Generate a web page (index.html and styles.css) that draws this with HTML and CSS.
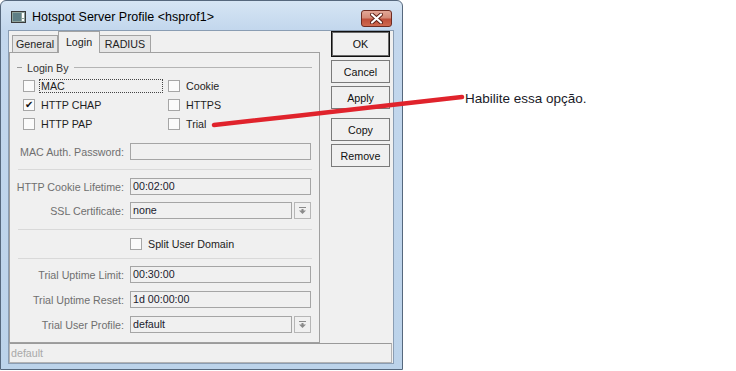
FILE: index.html
```html
<!DOCTYPE html>
<html lang="pt">
<head>
  <meta charset="UTF-8" />
  <title>Hotspot Server Profile</title>
  <link rel="stylesheet" href="styles.css">
</head>
<body>
<div class="page">
  <div class="window">
    <div class="titlebar">
      <svg class="app-icon" width="15" height="12" viewBox="0 0 15 12">
        <rect x="0.5" y="0.5" width="14" height="11" fill="#8fa39c" stroke="#3a3a3a"/>
        <rect x="2" y="2" width="8" height="8" fill="#5f7f86"/>
        <rect x="11" y="2" width="2" height="5" fill="#ffffff"/>
        <rect x="11" y="8" width="2" height="2" fill="#ffffff"/>
      </svg>
      <span class="title">Hotspot Server Profile &lt;hsprof1&gt;</span>
      <div class="close">
        <svg width="13" height="11" viewBox="0 0 13 11">
          <path d="M2 1.5 L11 9.5 M11 1.5 L2 9.5" stroke="#5a1d14" stroke-width="4" stroke-linecap="round"/>
          <path d="M2 1.5 L11 9.5 M11 1.5 L2 9.5" stroke="#ffffff" stroke-width="2.2" stroke-linecap="round"/>
        </svg>
      </div>
    </div>

    <div class="client">
      <div class="main">
        <div class="left">
          <div class="tabs">
            <div class="tab tab-general">General</div>
            <div class="tab tab-login active">Login</div>
            <div class="tab tab-radius">RADIUS</div>
          </div>

          <div class="panel">
            <div class="group-head">
              <span class="dash"></span>
              <span class="group-title">Login By</span>
              <span class="group-line"></span>
            </div>

            <div class="checks">
              <div class="check"><span class="box"></span><span class="cb-label focus">MAC</span></div>
              <div class="check"><span class="box"></span><span class="cb-label">Cookie</span></div>
              <div class="check"><span class="box checked">&#10004;</span><span class="cb-label">HTTP CHAP</span></div>
              <div class="check"><span class="box"></span><span class="cb-label">HTTPS</span></div>
              <div class="check"><span class="box"></span><span class="cb-label">HTTP PAP</span></div>
              <div class="check"><span class="box"></span><span class="cb-label">Trial</span></div>
            </div>

            <div class="row row-mac">
              <span class="label">MAC Auth. Password:</span>
              <span class="input"></span>
            </div>

            <div class="sep sep-1"></div>

            <div class="row row-cookie">
              <span class="label">HTTP Cookie Lifetime:</span>
              <span class="input">00:02:00</span>
            </div>
            <div class="row row-ssl">
              <span class="label">SSL Certificate:</span>
              <span class="combo">
                <span class="input">none</span>
                <span class="drop">
                  <svg width="7" height="7" viewBox="0 0 7 7"><rect x="0" y="0" width="7" height="1" fill="#8a8a8a"/><rect x="2.5" y="2" width="2" height="2" fill="#8a8a8a"/><path d="M0 3.5 L7 3.5 L3.5 7 Z" fill="#8a8a8a"/></svg>
                </span>
              </span>
            </div>

            <div class="sep sep-2"></div>

            <div class="row row-split">
              <span class="label"></span>
              <div class="check"><span class="box"></span><span class="cb-label">Split User Domain</span></div>
            </div>

            <div class="sep sep-3"></div>

            <div class="row row-limit">
              <span class="label">Trial Uptime Limit:</span>
              <span class="input">00:30:00</span>
            </div>
            <div class="row row-reset">
              <span class="label">Trial Uptime Reset:</span>
              <span class="input">1d 00:00:00</span>
            </div>
            <div class="row row-profile">
              <span class="label">Trial User Profile:</span>
              <span class="combo">
                <span class="input">default</span>
                <span class="drop">
                  <svg width="7" height="7" viewBox="0 0 7 7"><rect x="0" y="0" width="7" height="1" fill="#8a8a8a"/><rect x="2.5" y="2" width="2" height="2" fill="#8a8a8a"/><path d="M0 3.5 L7 3.5 L3.5 7 Z" fill="#8a8a8a"/></svg>
                </span>
              </span>
            </div>
          </div>
        </div>

        <div class="buttons">
          <button class="btn btn-default">OK</button>
          <button class="btn">Cancel</button>
          <button class="btn">Apply</button>
          <button class="btn btn-gap">Copy</button>
          <button class="btn">Remove</button>
        </div>
      </div>

      <div class="status">default</div>
    </div>
  </div>

  <div class="note">Habilite essa opção.</div>

  <!-- red annotation stroke drawn over the dialog -->
  <svg class="marker" width="736" height="371" viewBox="0 0 736 371">
    <path d="M214 125 L300 115.5 L400 104 L462 97" fill="none" stroke="#e0232c" stroke-width="4.5" stroke-linecap="round" stroke-linejoin="round"/>
  </svg>
</div>
</body>
</html>
```

FILE: styles.css
```css
body {
  margin: 0;
  background: #ffffff;
  font-family: "Liberation Sans", Arial, sans-serif;
}

.page {
  position: relative;
  width: 736px;
  height: 371px;
  display: flex;
  align-items: flex-start;
  overflow: hidden;
}

/* Window frame */
.window {
  box-sizing: border-box;
  width: 403px;
  height: 370px;
  border: 1px solid #56687d;
  border-radius: 6px 6px 0 0;
  background: linear-gradient(to bottom, #d6e5f4 0px, #c3d7ed 28px, #bcd3ea 100%);
  padding: 0 8px 5px 7px;
  display: flex;
  flex-direction: column;
}

.titlebar {
  height: 29px;
  display: flex;
  align-items: center;
}

.app-icon {
  margin-left: 3px;
  margin-top: 2px;
  flex: none;
}

.title {
  margin-left: 6px;
  margin-top: 3px;
  font-size: 12.5px;
  color: #000000;
  flex: 1;
}

.close {
  width: 29px;
  height: 15px;
  margin-right: 2px;
  margin-top: 5px;
  border: 1px solid #6e2c22;
  border-radius: 3px;
  background: linear-gradient(to bottom, #e3a797 0%, #d48b78 45%, #bf4f3a 55%, #cf6a50 100%);
  display: flex;
  align-items: center;
  justify-content: center;
}

/* Client area */
.client {
  box-sizing: border-box;
  height: 334px;
  border: 1px solid #8a9db3;
  background: #f0f0f0;
  display: flex;
  flex-direction: column;
}

.main {
  display: flex;
  height: 312px;
}

.left {
  width: 311px;
  display: flex;
  flex-direction: column;
}

.tabs {
  display: flex;
  align-items: flex-end;
  height: 21px;
  padding-left: 3px;
}

.tab {
  box-sizing: border-box;
  height: 17px;
  border: 1px solid #a3a3a3;
  border-bottom: none;
  background: #e6e6e6;
  font-size: 10.7px;
  color: #222222;
  display: flex;
  align-items: center;
  justify-content: center;
}

.tab-general {
  width: 46px;
}

.tab-login {
  width: 42px;
  height: 22px;
  margin-bottom: -1px;
  background: #f0f0f0;
  position: relative;
  z-index: 1;
  padding-bottom: 2px;
}

.tab-radius {
  width: 51px;
  border-left: none;
}

.panel {
  box-sizing: border-box;
  height: 291px;
  border: 1px solid #a0a0a0;
  padding-top: 8px;
  font-size: 10.7px;
}

.group-head {
  display: flex;
  align-items: center;
  height: 13px;
  padding: 0 7px;
}

.dash {
  width: 5px;
  height: 1px;
  background: #9a9a9a;
}

.group-title {
  margin: 0 5px;
  color: #333333;
}

.group-line {
  flex: 1;
  height: 1px;
  background: #b4b4b4;
}

.checks {
  display: grid;
  grid-template-columns: 145px 140px;
  grid-auto-rows: 19px;
  margin-top: 2px;
  padding-left: 13px;
}

.check {
  display: flex;
  align-items: center;
}

.box {
  box-sizing: border-box;
  width: 12px;
  height: 12px;
  border: 1px solid #a6a6a6;
  background: #fbfbfb;
  font-size: 10px;
  line-height: 10px;
  text-align: center;
  color: #111111;
  flex: none;
}

.cb-label {
  box-sizing: border-box;
  margin-left: 4px;
  padding: 0 2px 0 1px;
  border: 1px solid transparent;
  line-height: 12px;
  color: #1e1e1e;
}

.cb-label.focus {
  width: 124px;
  border: 1px dotted #444444;
}

.row {
  display: grid;
  grid-template-columns: 114px 181px;
  column-gap: 6px;
  align-items: center;
  height: 17px;
}

.label {
  text-align: right;
  color: #6f6f6f;
}

.input {
  box-sizing: border-box;
  height: 17px;
  border: 1px solid #a5a5a5;
  background: #f0f0f0;
  padding-left: 2px;
  line-height: 15px;
  color: #1b1b2e;
  overflow: hidden;
}

.combo {
  display: flex;
  gap: 2px;
}

.combo .input {
  width: 162px;
}

.drop {
  box-sizing: border-box;
  width: 17px;
  height: 17px;
  border: 1px solid #b6b6b6;
  display: flex;
  align-items: center;
  justify-content: center;
}

.sep {
  height: 1px;
  background: #d9d9d9;
  margin: 0 7px 0 8px;
}

.row-mac { margin-top: 10px; }
.sep-1 { margin-top: 9px; }
.row-cookie { margin-top: 8px; }
.row-ssl { margin-top: 7px; }
.sep-2 { margin-top: 10px; }
.row-split { margin-top: 4px; height: 19px; }
.sep-3 { margin-top: 5px; }
.row-limit { margin-top: 7px; }
.row-reset { margin-top: 8px; }
.row-profile { margin-top: 8px; }

.row-split .cb-label {
  color: #222222;
  margin-left: 4px;
}

/* Side buttons */
.buttons {
  margin-left: 11px;
  width: 59px;
  display: flex;
  flex-direction: column;
  gap: 3px;
}

.btn {
  box-sizing: border-box;
  height: 23px;
  padding: 0;
  border: 1px solid #7a7a7a;
  background: #f0f0f0;
  font-family: "Liberation Sans", Arial, sans-serif;
  font-size: 10.7px;
  color: #111111;
}

.btn-default {
  height: 26px;
  border: 1px solid #111111;
  box-shadow: inset 0 0 0 1px #6a6a6a;
}

.btn-gap {
  margin-top: 6px;
}

/* Status bar */
.status {
  box-sizing: border-box;
  height: 20px;
  margin-top: 0;
  margin-right: 1px;
  border: 1px solid #b3b3b3;
  border-top-color: #9a9a9a;
  padding-left: 1px;
  font-size: 10.7px;
  line-height: 18px;
  color: #a9a9a9;
}

/* Annotation */
.note {
  margin-left: 62px;
  margin-top: 91px;
  font-size: 13.5px;
  color: #1a1a28;
  white-space: nowrap;
}

.marker {
  position: absolute;
  left: 0;
  top: 0;
  pointer-events: none;
}
```
